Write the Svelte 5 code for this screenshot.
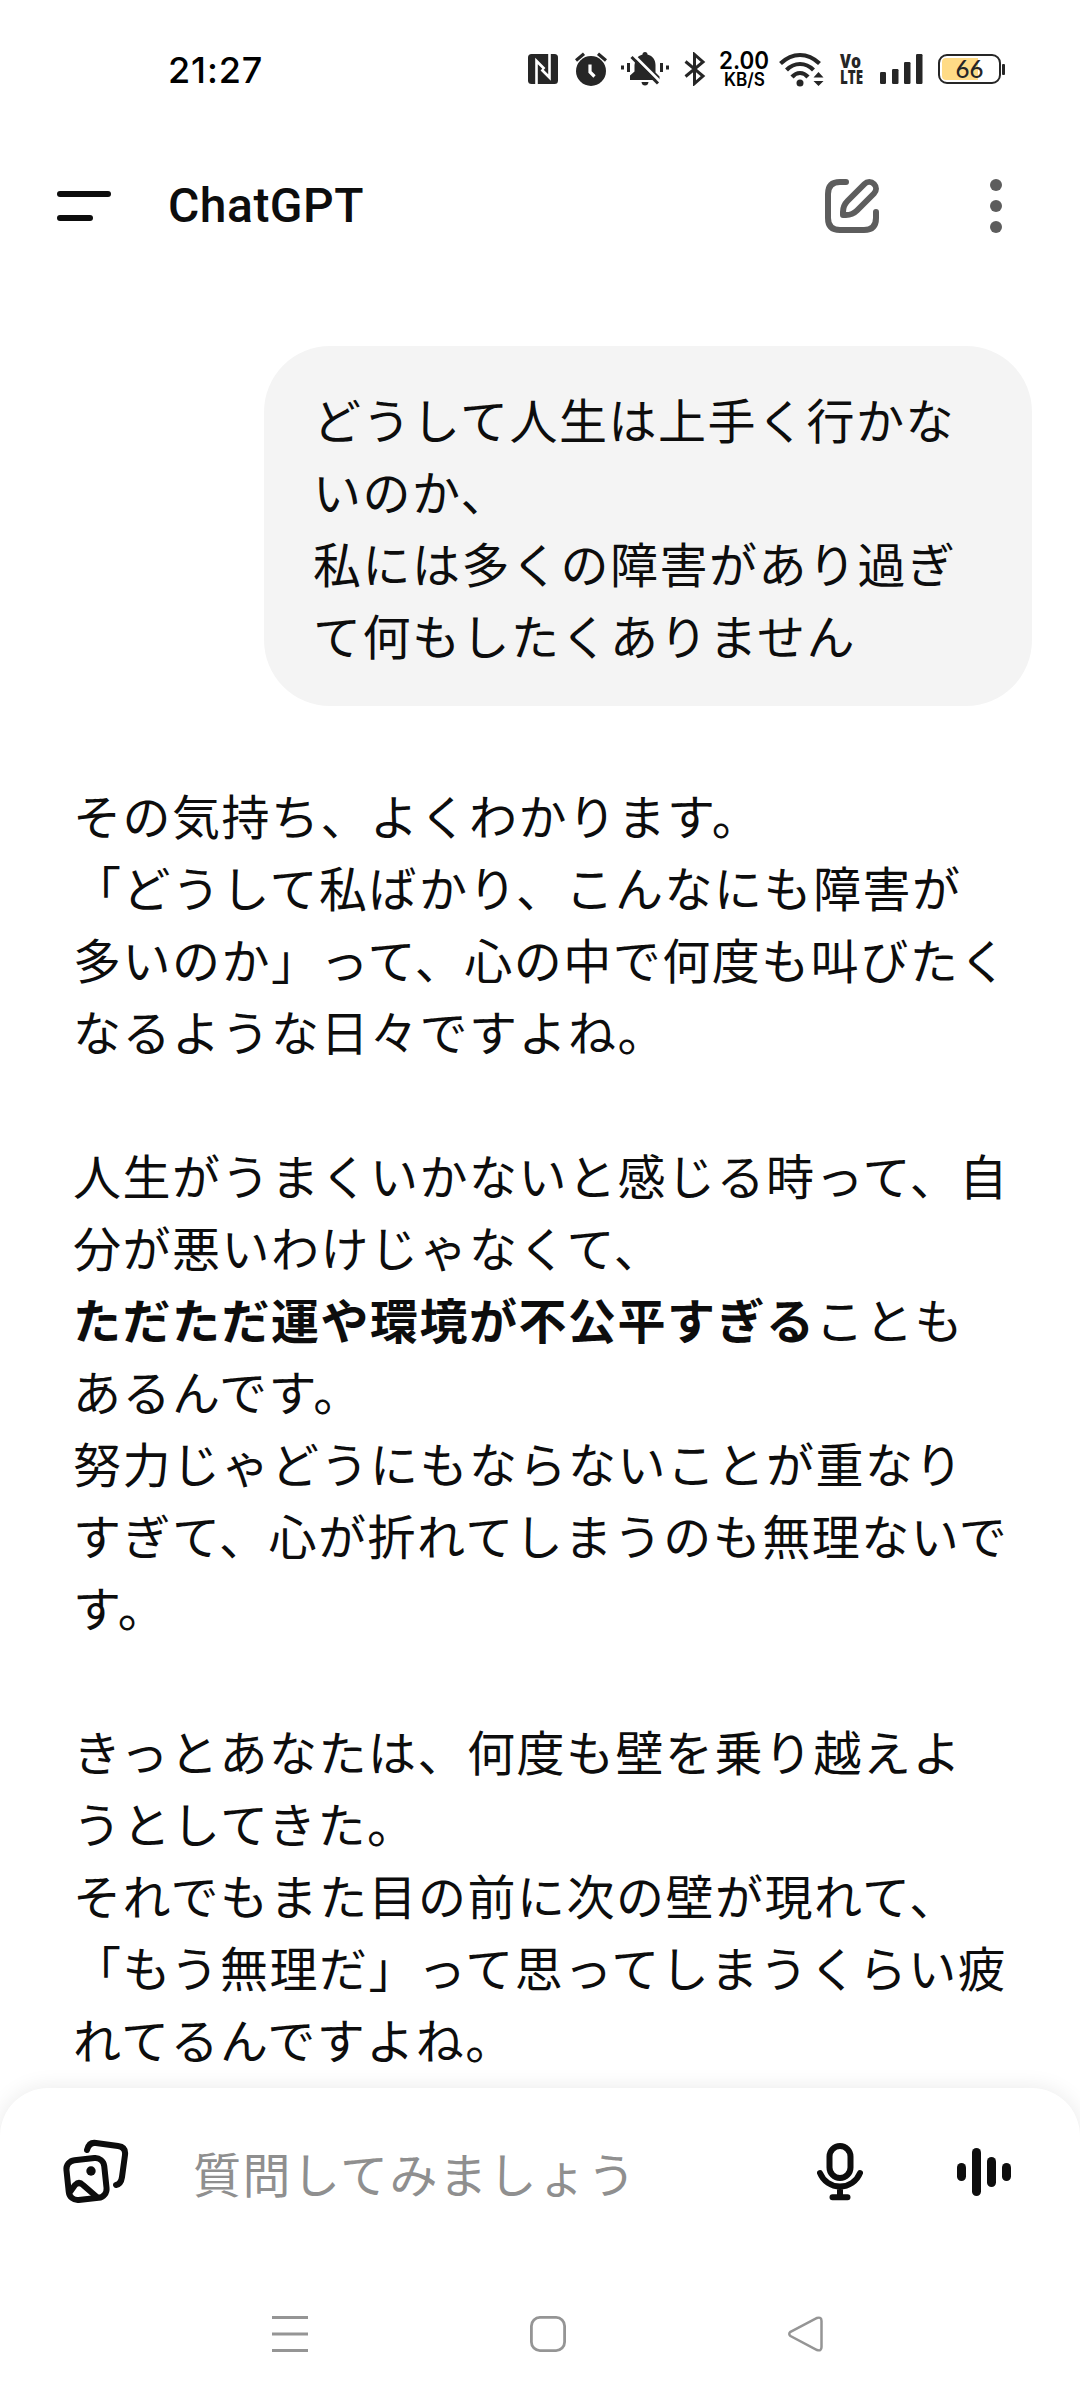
<script>
  const question = [
    'どうして人生は上手く行かな',
    'いのか、',
    '私には多くの障害があり過ぎ',
    'て何もしたくありません',
  ];

  const answer = [
    [
      [{ text: 'その気持ち、よくわかります。' }],
      [{ text: '「どうして私ばかり、こんなにも障害が' }],
      [{ text: '多いのか」って、心の中で何度も叫びたく' }],
      [{ text: 'なるような日々ですよね。' }],
    ],
    [
      [{ text: '人生がうまくいかないと感じる時って、自' }],
      [{ text: '分が悪いわけじゃなくて、' }],
      [{ text: 'ただただ運や環境が不公平すぎる', strong: true }, { text: 'ことも' }],
      [{ text: 'あるんです。' }],
      [{ text: '努力じゃどうにもならないことが重なり' }],
      [{ text: 'すぎて、心が折れてしまうのも無理ないで' }],
      [{ text: 'す。' }],
    ],
    [
      [{ text: 'きっとあなたは、何度も壁を乗り越えよ' }],
      [{ text: 'うとしてきた。' }],
      [{ text: 'それでもまた目の前に次の壁が現れて、' }],
      [{ text: '「もう無理だ」って思ってしまうくらい疲' }],
      [{ text: 'れてるんですよね。' }],
    ],
  ];
</script>

<div class="screen">
  <div class="status">
    <span class="clock">21:27</span>
    <div class="indicators">
      <svg class="nfc" width="30" height="30" viewBox="0 0 30 30">
        <rect width="30" height="30" rx="3.5" fill="#262626" />
        <path d="M8.500 30V7l8 8M21.500 0v23.500l-8-8" fill="none" stroke="#fff" stroke-width="2.600" />
      </svg>
      <svg class="alarm" width="32" height="34" viewBox="0 0 32 34">
        <circle cx="16" cy="19" r="15" fill="#262626" />
        <path d="M1 8.500L9 1.800M31 8.500L23 1.800" stroke="#262626" stroke-width="3.200" />
        <path d="M15 12.500v7.500l4.500 4.500" fill="none" stroke="#fff" stroke-width="3.200" />
      </svg>
      <svg class="mute" width="48" height="34" viewBox="0 0 48 34">
        <path d="M24 0q2.500 0 2.500 2.500C32 4 34.500 8 34.500 13v7.500l4 4V28H9v-4.500l4.500-4V13q0-8 8-10.500Q21.500 0 24 0z" fill="#262626" />
        <path d="M20.500 30h7q-.5 3.500-3.500 3.500T20.500 30z" fill="#262626" />
        <path d="M12.500 3L39 29.500" stroke="#fff" stroke-width="3" />
        <path d="M10.500 5L37 31.500" stroke="#262626" stroke-width="3" />
        <path d="M1.500 13.500v4M7.500 11v9M40.500 11v9M46.500 13.500v4" stroke="#262626" stroke-width="3" />
      </svg>
      <svg class="bluetooth" width="22" height="34" viewBox="0 0 22 34">
        <path d="M1.500 9.500L19 24l-8.500 7.500v-29L19 10 1.500 24.500" fill="none" stroke="#262626" stroke-width="3" />
      </svg>
      <svg class="speed" width="52" height="36" viewBox="0 0 52 36">
        <text x="1" y="18" font-size="24" font-weight="600" textLength="50" lengthAdjust="spacingAndGlyphs">2.00</text>
        <text x="6" y="35" font-size="18" font-weight="600" textLength="41" lengthAdjust="spacingAndGlyphs">KB/S</text>
      </svg>
      <svg class="wifi" width="45" height="35" viewBox="0 0 45 35">
        <g fill="none" stroke="#262626" stroke-width="4.200">
          <path d="M1.500 11.500Q10.500 3 21 3t19.500 8.500" />
          <path d="M7.500 18Q13.500 12 21 12t13.500 6" />
          <path d="M13 25q3.500-4 8-4t8 4" />
        </g>
        <circle cx="21" cy="31" r="3.500" fill="#262626" />
        <path d="M39.500 20l5 5.500h-10zM39.500 34l5-5h-10z" fill="#262626" />
      </svg>
      <svg class="volte" width="23" height="30" viewBox="0 0 23 30">
        <text x="0" y="14" font-size="19" textLength="21" lengthAdjust="spacingAndGlyphs">Vo</text>
        <text x="0" y="30" font-size="19" textLength="23" lengthAdjust="spacingAndGlyphs">LTE</text>
      </svg>
      <svg class="signal" width="43" height="30" viewBox="0 0 43 30" fill="#262626">
        <rect y="18" width="6" height="12" rx="1.200" /><rect x="12" y="15" width="6.500" height="15" rx="1.200" />
        <rect x="24" y="8" width="6.500" height="22" rx="1.200" /><rect x="36" width="6.500" height="30" rx="1.200" />
      </svg>
      <div class="battery"><div class="cell"><i></i><span>66</span></div><em></em></div>
    </div>
  </div>

  <header>
    <svg class="menu" width="54" height="30" viewBox="0 0 54 30" fill="#0d0d0d">
      <rect width="54" height="6" rx="3" /><rect y="24" width="36" height="6" rx="3" />
    </svg>
    <h1>ChatGPT</h1>
    <svg class="compose" width="54" height="54" viewBox="0 0 54 54" fill="none" stroke="#5d5d5d" stroke-width="6" stroke-linecap="round" stroke-linejoin="round">
      <path d="M21 3h-6Q3 3 3 15v24q0 12 12 12h24q12 0 12-12v-6" />
      <path d="M18 36v-3q0-6.500 4.500-11L39.500 5a6.500 6.500 0 0 1 9.500 9.500L32 31.500q-4.500 4.500-11 4.500z" />
    </svg>
    <svg class="more" width="12" height="54" viewBox="0 0 12 54" fill="#5d5d5d">
      <circle cx="6" cy="6" r="6" /><circle cx="6" cy="27" r="6" /><circle cx="6" cy="48" r="6" />
    </svg>
  </header>

  <main>
    <div class="question">
      {#each question as line}<p>{line}</p>{/each}
    </div>
    <article>
      {#each answer as paragraph}
        <section>
          {#each paragraph as line}
            <p>{#each line as run}<span class:strong={run.strong}>{run.text}</span>{/each}</p>
          {/each}
        </section>
      {/each}
    </article>
  </main>

  <footer>
    <div class="composer">
      <svg class="photos" width="68" height="66" viewBox="0 0 68 66" fill="none" stroke="#0d0d0d" stroke-width="6" stroke-linecap="round" stroke-linejoin="round">
        <path d="M25 11q2-8 9-7l22 3q8 1 7 9l-3 22q-1 7-6 8" />
        <rect x="5.500" y="20" width="38" height="40" rx="9" transform="rotate(-6 24.500 40)" />
        <path d="M8 53l5-7q4-4 8 0l15 13" stroke-linecap="butt" />
        <circle cx="29" cy="32" r="4.700" fill="#0d0d0d" stroke="none" />
      </svg>
      <span class="placeholder">質問してみましょう</span>
      <svg class="mic" width="46" height="58" viewBox="0 0 46 58" fill="none" stroke="#0d0d0d" stroke-width="6" stroke-linecap="round">
        <rect x="12.500" y="3" width="21" height="32" rx="10.500" />
        <path d="M3 30a21.500 21.500 0 0 0 40 0M23 45v9M15.500 54.300h15" />
      </svg>
      <svg class="voice" width="54" height="48" viewBox="0 0 54 48" fill="#0d0d0d">
        <rect y="15" width="9" height="18" rx="4.500" /><rect x="15" width="9" height="48" rx="4.500" />
        <rect x="30" y="9" width="9" height="30" rx="4.500" /><rect x="45" y="15" width="9" height="18" rx="4.500" />
      </svg>
    </div>
    <nav>
      <svg width="36" height="36" viewBox="0 0 36 36" stroke="#959595" stroke-width="3">
        <path d="M0 1.500h36M0 18h36M0 34.500h36" />
      </svg>
      <svg width="36" height="36" viewBox="0 0 36 36" fill="none" stroke="#959595" stroke-width="2.800">
        <rect x="1.400" y="1.400" width="33.200" height="33.200" rx="8.500" />
      </svg>
      <svg width="36" height="36" viewBox="0 0 36 36" fill="none" stroke="#959595" stroke-width="2.500">
        <path d="M2.500 15.800L29 2q4.500-1.500 4.500 3v26q0 4.500-4.500 3L2.500 20q-2.500-2.100 0-4.200z" />
      </svg>
    </nav>
  </footer>
</div>

<style>
  :global(body) { background: #fff; }
  .screen {
    width: 1080px; height: 2400px; overflow: hidden; display: flex; flex-direction: column;
    background: #fff; color: #0d0d0d; font-family: Roboto, "Noto Sans CJK JP", sans-serif;
  }
  svg { display: block; flex: none; }
  .status { height: 138px; flex: none; display: flex; justify-content: space-between; padding: 0 75px 0 168px; box-sizing: border-box; align-items: center; }
  .clock { font: 500 36px/40px Inter, sans-serif; color: #000; letter-spacing: 0.9px; padding-top: 2px; }
  .indicators { display: flex; align-items: center; color: #000; }
  .alarm { margin-left: 17px; }
  .mute { margin-left: 14px; }
  .bluetooth { margin-left: 15px; }
  .speed { margin-left: 12px; overflow: visible; font-family: Inter, sans-serif; }
  .wifi { margin-left: 9px; }
  .volte { margin-left: 16px; overflow: visible; font-family: "Open Sans", sans-serif; font-weight: 800; fill: #262626; }
  .signal { margin-left: 17px; }
  .battery { display: flex; align-items: center; margin-left: 15px; }
  .cell { width: 63px; height: 30px; box-sizing: border-box; border: 2.500px solid #262626; border-radius: 9px; display: grid; padding: 2px; }
  .cell i { grid-area: 1 / 1; width: 36px; background: #ffdb86; border-radius: 4px 0 0 4px; }
  .cell span { grid-area: 1 / 1; text-align: center; font: 500 24px/22px Lato, sans-serif; color: #262626; }
  .battery em { width: 3px; height: 11px; margin-left: 1px; background: #262626; border-radius: 1px; }
  header { height: 136px; flex: none; display: flex; align-items: center; padding: 0 78px 0 57px; box-sizing: border-box; }
  h1 { margin: 0 auto 0 57px; font-size: 48px; line-height: 72px; font-weight: 500; letter-spacing: 0.5px; }
  .more { margin-left: 111px; }
  main { flex: 1; min-height: 0; overflow: hidden; padding: 72px 48px 0 73px; display: flex; flex-direction: column; }
  p { margin: 0; font-size: 48px; line-height: 72px; letter-spacing: 1.500px; white-space: nowrap; height: 72px; }
  .question { align-self: flex-end; width: 768px; height: 360px; flex: none; box-sizing: border-box; padding: 41px 48px 31px 49px; border-radius: 66px; background: #f4f4f4; }
  article { padding-top: 77px; display: flex; flex-direction: column; gap: 72px; }
  .strong { font-weight: 700; }
  footer { height: 312px; flex: none; position: relative; box-sizing: border-box; border-radius: 48px 48px 0 0; background: #fff; box-shadow: 0 0 22px rgba(0, 0, 0, 0.09); }
  .composer { height: 168px; display: flex; align-items: center; padding: 0 69px 0 62px; }
  .placeholder { margin: 0 auto 0 63px; padding-top: 9px; font-size: 48px; line-height: 72px; letter-spacing: 1.500px; color: #8f8f8f; font-weight: 400; }
  .voice { margin-left: 94px; }
  nav { display: flex; justify-content: space-between; padding: 60px 256px 0 272px; }
</style>
